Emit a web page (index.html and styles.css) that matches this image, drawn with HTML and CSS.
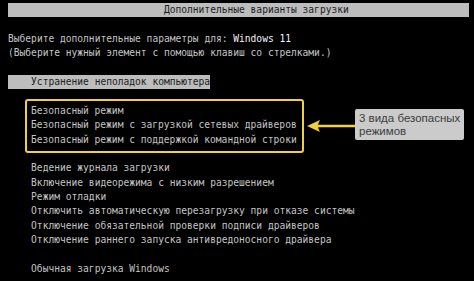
FILE: index.html
```html
<!DOCTYPE html>
<html lang="ru">
<head>
    <meta charset="UTF-8">
    <meta name="viewport" content="width=device-width, initial-scale=1.0">
    <title>Дополнительные варианты загрузки</title>
    <link rel="stylesheet" href="styles.css">
</head>
<body>
    <div class="screen">
        <div class="title-bar">Дополнительные варианты загрузки</div>
        <div class="row"></div>
        <div class="row">Выберите дополнительные параметры для: <span class="os">Windows 11</span></div>
        <div class="row">(Выберите нужный элемент с помощью клавиш со стрелками.)</div>
        <div class="row"></div>
        <div class="row"><span class="selected">Устранение неполадок компьютера</span></div>
        <div class="row"></div>

        <div class="safe-modes">
            <div class="row">Безопасный режим</div>
            <div class="row">Безопасный режим с загрузкой сетевых драйверов</div>
            <div class="row">Безопасный режим с поддержкой командной строки</div>
        </div>

        <div class="row"></div>
        <div class="row item">Ведение журнала загрузки</div>
        <div class="row item">Включение видеорежима с низким разрешением</div>
        <div class="row item">Режим отладки</div>
        <div class="row item">Отключить автоматическую перезагрузку при отказе системы</div>
        <div class="row item">Отключение обязательной проверки подписи драйверов</div>
        <div class="row item">Отключение раннего запуска антивредоносного драйвера</div>
        <div class="row"></div>
        <div class="row item">Обычная загрузка Windows</div>
    </div>

    <svg class="arrow" width="52" height="16" viewBox="0 0 52 16">
        <line x1="12" y1="8" x2="51" y2="8" stroke="#f2cf3c" stroke-width="2.5"/>
        <path d="M2 8 L15 2 Q11 8 15 14 Z" fill="#f2cf3c"/>
    </svg>
    <div class="note">3 вида безопасных<br>режимов</div>
</body>
</html>
```

FILE: styles.css
```css
body {
    margin: 0;
    background: #000;
    overflow: hidden;
}

.screen {
    padding: 3px 0 0 8px;
    font-family: "DejaVu Sans Mono", monospace;
    font-size: 9.6px;
    color: #c4c4c4;
}

.row {
    height: 14.4px;
    line-height: 14.4px;
    white-space: pre;
}

.title-bar {
    width: 461px;
    height: 14.4px;
    line-height: 14.4px;
    padding-left: 27ch;
    box-sizing: border-box;
    background: #bdbdbd;
    color: #1c1c1c;
}

.os {
    color: #f4f4f4;
}

.selected {
    display: inline-block;
    width: 35ch;
    padding-left: 4ch;
    box-sizing: border-box;
    background: #bdbdbd;
    color: #1c1c1c;
}

.item {
    padding-left: 4ch;
}

.safe-modes {
    width: 279px;
    box-sizing: border-box;
    margin: -5px 0 -6px 17px;
    padding: 3px 0 4px 4px;
    border: 2px solid #f2cf3c;
    border-radius: 3px;
}

.arrow {
    position: absolute;
    left: 305px;
    top: 118px;
}

.note {
    position: absolute;
    left: 355px;
    top: 109px;
    width: 109px;
    height: 31px;
    box-sizing: border-box;
    padding: 3px 2px 3px 4px;
    background: #cbcbcb;
    border-radius: 2px;
    font-family: "Liberation Sans", Arial, sans-serif;
    font-size: 11.5px;
    line-height: 12.5px;
    white-space: nowrap;
    color: #3c3c3c;
}
```
